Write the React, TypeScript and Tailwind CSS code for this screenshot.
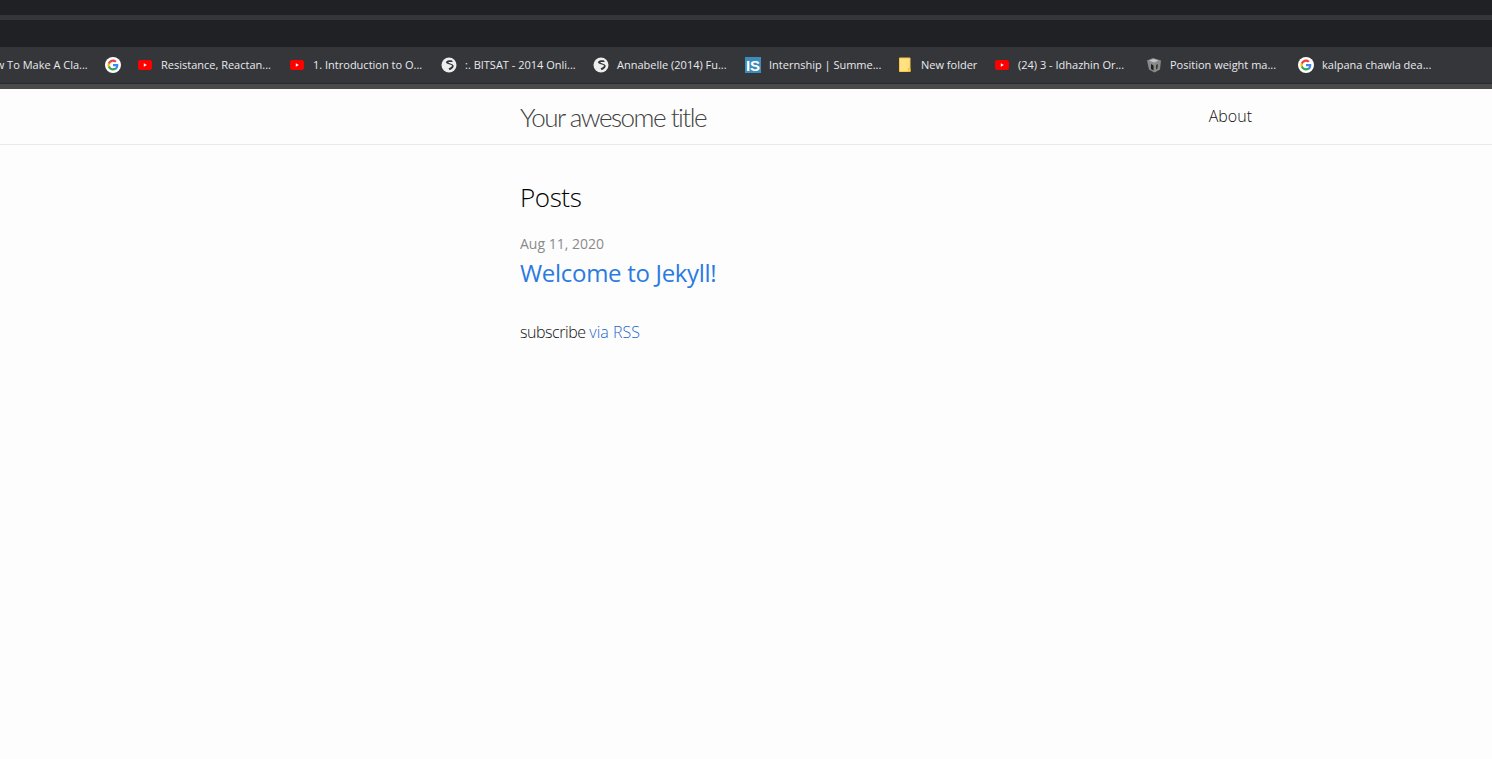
import type { ReactNode } from "react"

function Google() {
	return (
		<svg viewBox="0 0 16 16" className="h-4 w-4 shrink-0">
			<circle cx="8" cy="8" r="8" fill="#fff" />
			<path d="M13.300 8.200c0-.4 0-.8-.1-1.200H8v2.200h3c-.1.7-.5 1.300-1.100 1.700v1.400h1.800c1-1 1.600-2.400 1.600-4.100z" fill="#4285f4" />
			<path d="M8 13.500c1.500 0 2.800-.5 3.700-1.400l-1.800-1.400c-.5.3-1.100.5-1.900.5-1.400 0-2.700-1-3.100-2.300H3v1.400c.9 1.900 2.800 3.200 5 3.200z" fill="#34a853" />
			<path d="M4.900 8.900c-.1-.3-.2-.6-.2-.9s.1-.6.200-.9V5.700H3C2.700 6.400 2.500 7.200 2.500 8s.2 1.600.5 2.300l1.900-1.400z" fill="#fbbc05" />
			<path d="M8 4.800c.8 0 1.500.3 2.100.8l1.600-1.600c-1-.9-2.200-1.500-3.700-1.500-2.200 0-4.100 1.300-5 3.200l1.900 1.400C5.300 5.700 6.600 4.800 8 4.800z" fill="#ea4335" />
		</svg>
	)
}

function Youtube() {
	return (
		<svg viewBox="0 0 16 16" className="h-4 w-4 shrink-0">
			<rect x="1" y="3" width="14" height="10" rx="2.500" fill="#f00" />
			<path d="M6.800 6.200v3.600L9.800 8z" fill="#fff" />
		</svg>
	)
}

function Globe() {
	return (
		<svg viewBox="0 0 16 16" className="h-4 w-4 shrink-0">
			<circle cx="8" cy="8" r="7.500" fill="#eceded" />
			<path d="M11 3.400C9.300 2.900 6.300 3.100 5.200 4.600c-.7 1.100.3 2 1.800 2.400l2.800.7c1.300.4 1.500 1.200.8 1.900-.7.700-1.800 1.400-3 1.700l.8 1.700c1.600-.3 3.400-1.500 4.100-3.100.5-1.300-.2-2.600-1.800-3L8 6c-.7-.2-.7-.7-.2-.9.900-.3 2.600-.2 4-.2z" fill="#35363a" />
		</svg>
	)
}

function InternShala() {
	return (
		<svg viewBox="0 0 16 16" className="h-4 w-4 shrink-0">
			<rect width="16" height="16" fill="#3d8dbc" />
			<text x="8" y="13.500" textAnchor="middle" fontSize="15" fontWeight="700" fill="#fff" className="font-['Liberation_Sans',sans-serif]">
				IS
			</text>
		</svg>
	)
}

function Folder() {
	return (
		<svg viewBox="0 0 15 16" className="h-4 w-[15px] shrink-0">
			<path d="M1.500 1h10.500v13.500H1.500z" fill="#ffe082" stroke="#f6c945" />
			<path d="M10 11h2.500v4H10z" fill="#f6bf26" />
			<path d="M10.800 12h1v2h-1z" fill="#ffe082" />
		</svg>
	)
}

function Cube() {
	return (
		<svg viewBox="0 0 16 16" className="h-4 w-4 shrink-0">
			<path d="M1 3.500L7 1l8 2.500-1 9L8.500 15.500 3 12.500z" fill="#8a8a8a" />
			<path d="M3 3.500L7.500 2l5 1.500-4.500 2z" fill="#c4c4c4" />
			<path d="M5 7l2.500 1.500v5L5 12z" fill="#1f1f1f" />
			<path d="M10 8l2-1-.5 4.500-1.500 1z" fill="#3a3a3a" />
		</svg>
	)
}

function Bookmark({ icon, label, width }: { icon?: ReactNode; label?: string; width: string }) {
	return (
		<div className={`flex shrink-0 items-center gap-2 ${width}`}>
			{icon}
			{label && <span className="whitespace-nowrap text-[11px] text-[#e8eaed]">{label}</span>}
		</div>
	)
}

export default function App() {
	return (
		<div className="flex min-h-[759px] flex-col overflow-hidden bg-[#fdfdfd] font-['Open_Sans','Noto_Sans',sans-serif]">
			<div className="h-[15px] bg-[#202124]" />
			<div className="h-[5px] bg-[#35363a]" />
			<div className="h-[27px] bg-[#202124]" />
			<div className="flex h-[36px] items-center overflow-hidden bg-[#35363a]">
				<div className="ml-[-19px] flex items-center">
					<Bookmark label="How To Make A Cla..." width="w-[124px]" />
					<Bookmark icon={<Google />} width="w-[32px]" />
					<Bookmark icon={<Youtube />} label="Resistance, Reactan..." width="w-[152px]" />
					<Bookmark icon={<Youtube />} label="1. Introduction to O..." width="w-[152px]" />
					<Bookmark icon={<Globe />} label=":. BITSAT - 2014 Onli..." width="w-[152px]" />
					<Bookmark icon={<Globe />} label="Annabelle (2014) Fu..." width="w-[152px]" />
					<Bookmark icon={<InternShala />} label="Internship | Summe..." width="w-[153px]" />
					<Bookmark icon={<Folder />} label="New folder" width="w-[96px]" />
					<Bookmark icon={<Youtube />} label="(24) 3 - Idhazhin Or..." width="w-[152px]" />
					<Bookmark icon={<Cube />} label="Position weight ma..." width="w-[152px]" />
					<Bookmark icon={<Google />} label="kalpana chawla dea..." width="w-[152px]" />
				</div>
			</div>
			<div className="h-[1px] bg-[#2a2b2e]" />
			<div className="h-[5px] bg-[#4a4a4a]" />

			<header className="flex h-[56px] items-start justify-between border-b border-[#e8e8e8] pl-[520px] pr-[240px]">
				<span className="mt-[10px] font-['Lato',sans-serif] text-[26px] font-light leading-[36px] tracking-[-1.5px] text-[#424242]">Your awesome title</span>
				<span className="mt-[15px] text-[16px] font-light leading-[24px] text-[#111]">About</span>
			</header>

			<main className="pl-[520px] pt-[33px]">
				<h2 className="text-[26px] font-light leading-[38px] tracking-[-0.4px] text-[#000]">Posts</h2>
				<p className="mt-[18px] text-[14px] leading-[20px] text-[#8a8a8a]">Aug 11, 2020</p>
				<a className="mt-[3px] block text-[24px] leading-[32px] tracking-[-0.3px] text-[#2a7ae2]">Welcome to Jekyll!</a>
				<p className="mt-[31px] text-[16px] font-light leading-[24px] tracking-[-0.45px] text-[#111]">
					subscribe <a className="tracking-normal text-[#1f66c8]">via RSS</a>
				</p>
			</main>
		</div>
	)
}
